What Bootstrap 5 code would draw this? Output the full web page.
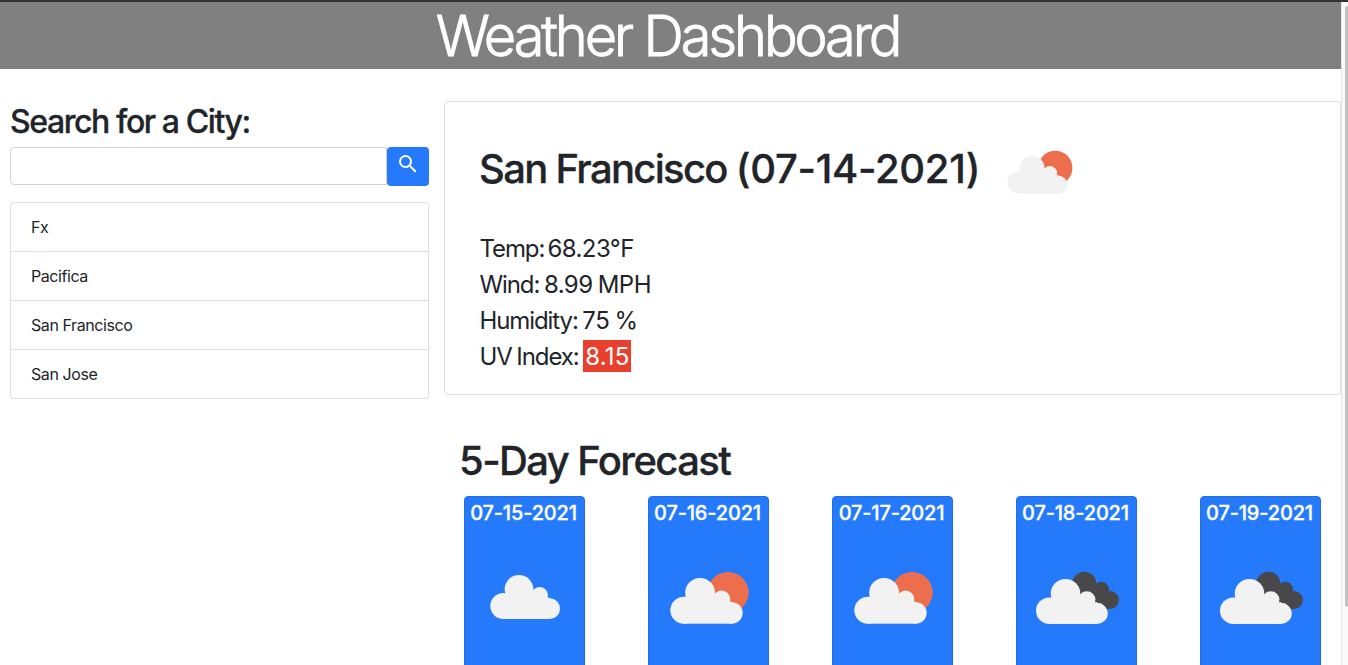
<!DOCTYPE html>
<html lang="en">
<head>
<meta charset="utf-8">
<title>Weather Dashboard</title>
<link href="https://cdn.jsdelivr.net/npm/bootstrap@5.3.0/dist/css/bootstrap.min.css" rel="stylesheet">
<style>
body { font-family: Inter, "Liberation Sans", sans-serif; color: #212529; background: #fff; }
.window { height: 665px; border-top: 2px solid #323234; }
.page { width: 1341px; }
.track { width: 7px; background: #fafafa; border-left: 1px solid #e6e6e6; padding-top: 4px; }
.thumb { height: 601px; margin-left: 3px; background: #c1c1c1; border-radius: 4px 0 0 4px; }
.title-bar { height: 67px; background: #808080; color: #fff; }
.title-bar h1 { font-size: 56px; font-weight: 300; line-height: 69px; letter-spacing: -3.15px; padding-right: 6px; -webkit-text-stroke: .9px #fff; }
.side { width: 419px; margin: 32px 15px 0 10px; }
.side h2 { font-size: 32px; font-weight: 500; line-height: 38px; letter-spacing: -1.42px; padding-top: 2px; margin: 0 0 6px; -webkit-text-stroke: .3px; }
.side .form-control { height: 38px; border-color: #ced4da; border-radius: 4px 0 0 4px; }
.search-btn { width: 42px; height: 39px; background: #247afb; border-radius: 4px; padding: 5px 0 0 9px; border: 0; }
.side .list-group { margin-top: 16px; --bs-list-group-border-radius: 4px; --bs-list-group-border-color: #dfdfdf; }
.side .list-group-item { padding: 12px 20px; line-height: 24px; font-size: 16px; letter-spacing: -.42px; color: #212529; }
.results { margin-top: 32px; }
.today { height: 294px; border: 1px solid #dfdfdf; border-radius: 4px; padding: 28px 34px; }
.today h2, .outlook { font-size: 40px; font-weight: 500; line-height: 48px; letter-spacing: -1.7px; -webkit-text-stroke: .3px; }
.today h2 .date { letter-spacing: -.3px; }
.outlook { letter-spacing: -1.6px; }
.today .head { height: 77px; }
.today .head svg { width: 83px; height: 83px; margin: 5px 0 0 18px; }
.today p { font-size: 24px; line-height: 36px; letter-spacing: -1.1px; margin: 0 0 0 .5px; word-spacing: -1px; }
.today p span { letter-spacing: -.55px; }
.today p .uv { background: #e8402c; color: #fff; padding: 2px 1.5px 1px 2px; letter-spacing: .2px; }
.today p .temp { margin-left: -1.5px; }
.outlook { margin: 42px 0 11px 15px; }
.days { margin-left: 20px; gap: 63px; }
.day { width: 121px; height: 260px; background: #247afb; border: 1px solid #2270e6; border-radius: 4px; color: #fff; }
.day h5 { font-size: 20px; font-weight: 500; line-height: 24px; letter-spacing: -.18px; margin: 4px 0 22px -2px; white-space: nowrap; -webkit-text-stroke: .3px #fff; }
.day svg { width: 100px; height: 100px; }
</style>
</head>
<body class="overflow-hidden">
<svg width="0" height="0" class="position-absolute">
  <defs>
    <g id="puff">
      <circle cx="39" cy="93" r="39"/><circle cx="86" cy="43" r="43"/><circle cx="148" cy="61" r="25"/><circle cx="178" cy="101" r="31"/>
      <rect x="39" y="68" width="139" height="64"/><rect x="60" y="50" width="88" height="50"/>
    </g>
    <symbol id="cloud" viewBox="0 0 300 300"><use href="#puff" x="46" y="84" fill="#f2f2f2"/></symbol>
    <symbol id="suncloud" viewBox="0 0 300 300"><circle cx="207" cy="137" r="62" fill="#ec6e4c"/><use href="#puff" transform="translate(34 93) scale(1.038)" fill="#f2f2f2"/></symbol>
    <symbol id="darkcloud" viewBox="0 0 300 300">
      <g fill="#48484a"><circle cx="172" cy="110" r="36"/><circle cx="223" cy="127" r="23"/><circle cx="249" cy="159" r="27"/><path d="M172 110L223 127L249 140V186H200Z"/></g>
      <use href="#puff" transform="translate(27 96) scale(1.03 1.022)" fill="#f2f2f2"/>
    </symbol>
  </defs>
</svg>
<div class="window d-flex overflow-hidden">
  <div class="page flex-shrink-0">
    <header class="title-bar text-center"><h1 class="m-0">Weather Dashboard</h1></header>
    <div class="d-flex align-items-start">
      <aside class="side flex-shrink-0">
        <h2>Search for a City:</h2>
        <form class="d-flex">
          <input type="text" class="form-control" aria-label="City">
          <button type="button" class="search-btn flex-shrink-0 d-flex" aria-label="Search"><svg width="24" height="24" viewBox="0 0 24 24" fill="#fff"><path d="M15.5 14h-.79l-.28-.27A6.471 6.471 0 0 0 16 9.5 6.5 6.5 0 1 0 9.5 16c1.61 0 3.09-.59 4.23-1.57l.27.28v.79l5 4.99L20.49 19l-4.99-5zm-6 0C7.01 14 5 11.99 5 9.5S7.01 5 9.5 5 14 7.01 14 9.5 11.99 14 9.5 14z"/></svg></button>
        </form>
        <ul class="list-group">
          <li class="list-group-item">Fx</li>
          <li class="list-group-item">Pacifica</li>
          <li class="list-group-item">San Francisco</li>
          <li class="list-group-item">San Jose</li>
        </ul>
      </aside>
      <main class="results flex-grow-1">
        <section class="today">
          <div class="head d-flex align-items-center"><h2 class="m-0">San Francisco <span class="date">(07-14-2021)</span></h2><svg><use href="#suncloud"/></svg></div>
          <div class="pt-4">
            <p>Temp: <span class="temp">68.23°F</span></p>
            <p>Wind: <span>8.99 MPH</span></p>
            <p>Humidity: <span>75 %</span></p>
            <p>UV Index: <span class="uv">8.15</span></p>
          </div>
        </section>
        <h2 class="outlook">5-Day Forecast</h2>
        <div class="days d-flex">
          <div class="day flex-shrink-0 text-center"><h5>07-15-2021</h5><svg><use href="#cloud"/></svg></div>
          <div class="day flex-shrink-0 text-center"><h5>07-16-2021</h5><svg><use href="#suncloud"/></svg></div>
          <div class="day flex-shrink-0 text-center"><h5>07-17-2021</h5><svg><use href="#suncloud"/></svg></div>
          <div class="day flex-shrink-0 text-center"><h5>07-18-2021</h5><svg><use href="#darkcloud"/></svg></div>
          <div class="day flex-shrink-0 text-center"><h5>07-19-2021</h5><svg><use href="#darkcloud"/></svg></div>
        </div>
      </main>
    </div>
  </div>
  <div class="track flex-shrink-0"><div class="thumb"></div></div>
</div>
<script src="https://cdn.jsdelivr.net/npm/bootstrap@5.3.0/dist/js/bootstrap.bundle.min.js"></script>
</body>
</html>
